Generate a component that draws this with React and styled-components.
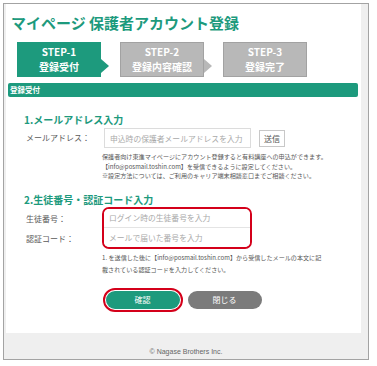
import styled, { createGlobalStyle } from "styled-components";

const GlobalStyle = createGlobalStyle`
  html, body {
    margin: 0;
    padding: 0;
    background: #fff;
  }
  body {
    font-family: "Noto Sans CJK JP", "Noto Sans", sans-serif;
    color: #555;
  }
`;

const TEAL = "#1d9a7d";

const Frame = styled.div`
  width: 366px;
  margin: 3px 0 0 3px;
  box-sizing: border-box;
  border: 1px solid #a3a3a3;
  background: #efefef;
  display: flex;
  flex-direction: column;
`;

const Panel = styled.div`
  margin: 0 7px 0 2px;
  background: #fff;
  display: flex;
  flex-direction: column;
  padding-bottom: 24px;
`;

const Title = styled.h1`
  margin: 9px 0 0 5px;
  font-size: 15px;
  line-height: 20px;
  font-weight: 700;
  color: ${TEAL};
  white-space: nowrap;
`;

const Steps = styled.div`
  display: flex;
  gap: 19px;
  margin: 9px 0 0 11px;
`;

const Step = styled.div`
  position: relative;
  width: 84px;
  height: 35px;
  box-sizing: border-box;
  background: ${(p) => (p.$active ? TEAL : "#b8b8b8")};
  border: 1px solid ${(p) => (p.$active ? TEAL : "#a2a2a2")};
  color: #fff;
  font-weight: 700;
  font-size: 10px;
  display: flex;
  flex-direction: column;
  align-items: center;
  justify-content: center;
  &::after {
    content: "";
    display: ${(p) => (p.$arrow ? "block" : "none")};
    position: absolute;
    right: -9px;
    top: 16px;
    border-top: 7px solid transparent;
    border-bottom: 7px solid transparent;
    border-left: 8px solid ${(p) => (p.$active ? TEAL : "#b8b8b8")};
  }
`;

const StepLine = styled.div`
  height: 14.5px;
  line-height: 14.5px;
  white-space: nowrap;
`;

const Bar = styled.div`
  margin: 6px 3px 0 2px;
  height: 14px;
  border-radius: 2px;
  background: ${TEAL};
  color: #fff;
  font-size: 7.5px;
  font-weight: 700;
  line-height: 14px;
  padding-left: 2px;
`;

const Section = styled.section`
  display: flex;
  flex-direction: column;
  margin: ${(p) => p.$top}px 0 0 18px;
`;

const SectionTitle = styled.h2`
  margin: 0;
  font-size: 10px;
  line-height: 14px;
  font-weight: 700;
  color: ${TEAL};
`;

const Row = styled.div`
  display: flex;
  align-items: center;
  margin-top: 1px;
`;

const Label = styled.div`
  width: ${(p) => p.$w || 80}px;
  height: ${(p) => p.$h || 20}px;
  line-height: ${(p) => p.$h || 20}px;
  padding-left: 2px;
  box-sizing: border-box;
  font-size: 8px;
  color: #5a5a5a;
  white-space: nowrap;
`;

const Input = styled.input`
  width: 147px;
  height: 20px;
  box-sizing: border-box;
  border: 1px solid #dcdcdc;
  padding: 0 5px;
  font-family: inherit;
  font-size: 7.8px;
  color: #444;
  outline: none;
  &::placeholder {
    color: #a9a9a9;
  }
`;

const SendButton = styled.button`
  margin-left: 8px;
  width: 26px;
  height: 17px;
  padding: 0;
  box-sizing: border-box;
  border: 1px solid #c8c8c8;
  background: #fff;
  font-family: inherit;
  font-size: 8px;
  color: #555;
`;

const Notes = styled.div`
  margin: ${(p) => p.$top}px 0 0 78px;
  font-size: 6.1px;
  line-height: ${(p) => p.$lh}px;
  color: #555;
  white-space: nowrap;
`;

const CodeGrid = styled.div`
  display: flex;
`;

const LabelCol = styled.div`
  display: flex;
  flex-direction: column;
  padding-top: 2px;
`;

const RedBox = styled.div`
  display: flex;
  flex-direction: column;
  border: 2px solid #d4001a;
  border-radius: 7px;
  overflow: hidden;
  ${Input} {
    width: 146px;
    height: 19px;
    border-color: #e4e4e4;
    border-left: none;
    border-right: none;
  }
  ${Input}:first-child {
    border-top: none;
  }
  ${Input}:last-child {
    border-top: none;
    border-bottom: none;
  }
`;

const Buttons = styled.div`
  display: flex;
  justify-content: center;
  gap: 8px;
  margin-top: 15px;
`;

const PillButton = styled.button`
  width: 74px;
  height: 18px;
  border: none;
  border-radius: 9px;
  background: ${(p) => (p.$primary ? TEAL : "#7b7b7b")};
  color: #fff;
  font-family: inherit;
  font-size: 8px;
  padding: 0;
  outline: ${(p) => (p.$marked ? "2px solid #d4001a" : "none")};
  outline-offset: 1px;
`;

const Footer = styled.footer`
  height: 26px;
  box-sizing: border-box;
  padding-top: 14px;
  text-align: center;
  font-family: "Liberation Sans", Arial, sans-serif;
  font-size: 7px;
  line-height: 10px;
  color: #666;
`;

export default function App() {
  return (
    <>
      <GlobalStyle />
      <Frame>
        <Panel>
          <Title>マイページ 保護者アカウント登録</Title>
          <Steps>
            <Step $active $arrow>
              <StepLine>STEP-1</StepLine>
              <StepLine>登録受付</StepLine>
            </Step>
            <Step $arrow>
              <StepLine>STEP-2</StepLine>
              <StepLine>登録内容確認</StepLine>
            </Step>
            <Step>
              <StepLine>STEP-3</StepLine>
              <StepLine>登録完了</StepLine>
            </Step>
          </Steps>
          <Bar>登録受付</Bar>

          <Section $top={16}>
            <SectionTitle>1.メールアドレス入力</SectionTitle>
            <Row>
              <Label $w={80}>メールアドレス：</Label>
              <Input placeholder="申込時の保護者メールアドレスを入力" />
              <SendButton>送信</SendButton>
            </Row>
            <Notes $top={4} $lh={9.5}>
              <div>保護者向け東進マイページにアカウント登録すると有料講座への申込ができます。</div>
              <div>【info@posmail.toshin.com】を受信できるように設定してください。</div>
              <div>※設定方法については、ご利用のキャリア端末相談窓口までご相談ください。</div>
            </Notes>
          </Section>

          <Section $top={12}>
            <SectionTitle>2.生徒番号・認証コード入力</SectionTitle>
            <CodeGrid>
              <LabelCol>
                <Label $w={78} $h={19}>生徒番号：</Label>
                <Label $w={78} $h={21}>認証コード：</Label>
              </LabelCol>
              <RedBox>
                <Input placeholder="ログイン時の生徒番号を入力" />
                <Input placeholder="メールで届いた番号を入力" />
              </RedBox>
            </CodeGrid>
            <Notes $top={3} $lh={12}>
              <div>1. を送信した後に【info@posmail.toshin.com】から受信したメールの本文に記</div>
              <div>載されている認証コードを入力してください。</div>
            </Notes>
          </Section>

          <Buttons>
            <PillButton $primary $marked>確認</PillButton>
            <PillButton>閉じる</PillButton>
          </Buttons>
        </Panel>
        <Footer>© Nagase Brothers Inc.</Footer>
      </Frame>
    </>
  );
}
